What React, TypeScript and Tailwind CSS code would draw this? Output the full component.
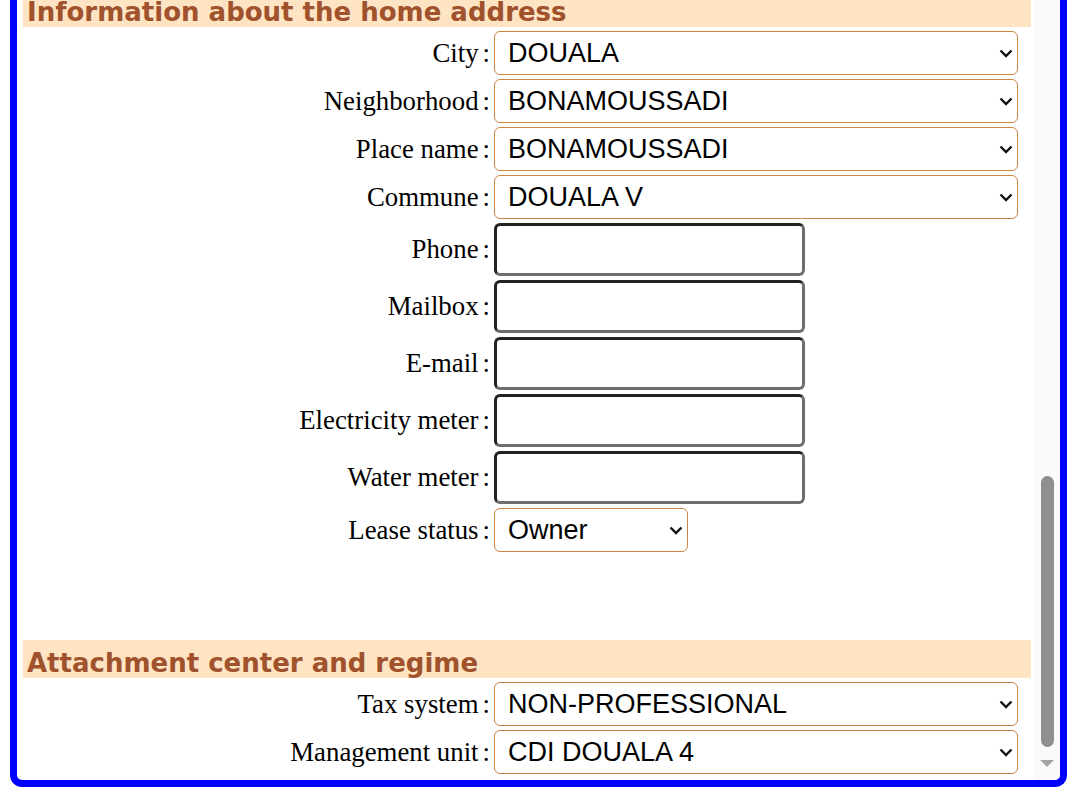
import React from 'react';

const label = 'text-right text-[26.8px] text-black leading-none [font-family:"Liberation_Serif",serif]';
const selectCls =
  'h-[44px] appearance-none border border-[#cd853f] rounded-[6px] bg-white pl-[13px] pr-8 text-[27px] text-black [font-family:"Liberation_Sans",Arial,sans-serif]';
const inputCls =
  'h-[53px] w-[311px] border-[3px] border-t-[#222] border-l-[#222] border-b-[#6e6e6e] border-r-[#6e6e6e] rounded-[6px] bg-white';

const Row = ({ name, children }: { name: string; children: React.ReactNode }) => (
  <div className="flex items-center">
    <div className={`${label} w-[477px] pr-1`}>
      {name}
      <span className="ml-[4px]">:</span>
    </div>
    {children}
  </div>
);

const Heading = ({ children }: { children: React.ReactNode }) => (
  <div className="ml-[6px] mr-[3px] h-[38px] bg-[#ffe4c4] pl-1 pt-[10px] text-[26px] font-bold leading-none text-[#a0522d] [font-family:'DejaVu_Sans',Verdana,sans-serif]">
    {children}
  </div>
);

const Select = ({ value, width }: { value: string; width: string }) => (
  <div className={`relative ${width}`}>
    <select className={`${selectCls} w-full`} defaultValue={value}>
      <option>{value}</option>
    </select>
    <svg
      width="14"
      height="9"
      viewBox="0 0 14 9"
      className="pointer-events-none absolute right-[5px] top-[18px]"
    >
      <path d="M1.5 1.5 L7 7 L12.5 1.5" fill="none" stroke="#111" strokeWidth="2.4" />
    </svg>
  </div>
);

export default function App() {
  const addressSelects = [
    { name: 'City', value: 'DOUALA' },
    { name: 'Neighborhood', value: 'BONAMOUSSADI' },
    { name: 'Place name', value: 'BONAMOUSSADI' },
    { name: 'Commune', value: 'DOUALA V' },
  ];
  const inputs = ['Phone', 'Mailbox', 'E-mail', 'Electricity meter', 'Water meter'];

  return (
    <div className="h-[789px] w-[1075px] overflow-hidden bg-white">
      <div className="ml-[10px] flex h-[787px] w-[1057px] overflow-hidden rounded-b-[12px] border-x-[7px] border-b-[7px] border-t-0 border-[#0000ff]">
        {/* Form */}
        <div className="flex-1 overflow-hidden">
          <div className="-mt-[11px] flex flex-col gap-1">
            <Heading>Information about the home address</Heading>
            {addressSelects.map((s) => (
              <Row key={s.name} name={s.name}>
                <Select value={s.value} width="w-[524px]" />
              </Row>
            ))}
            {inputs.map((n) => (
              <Row key={n} name={n}>
                <input className={inputCls} />
              </Row>
            ))}
            <Row name="Lease status">
              <Select value="Owner" width="w-[194px]" />
            </Row>
            <div className="h-[80px]" />
            <Heading>Attachment center and regime</Heading>
            <Row name="Tax system">
              <Select value="NON-PROFESSIONAL" width="w-[524px]" />
            </Row>
            <Row name="Management unit">
              <Select value="CDI DOUALA 4" width="w-[524px]" />
            </Row>
          </div>
        </div>

        {/* Scrollbar */}
        <div className="flex w-[26px] flex-col items-center bg-[#fafafa] pb-[12px]">
          <div className="flex-1" />
          <div className="h-[271px] w-[13px] rounded-full bg-[#8f8f8f]" />
          <svg width="16" height="9" viewBox="0 0 16 9" className="mt-[12px]">
            <polygon points="1,1 15,1 8,8" fill="#a3a3a3" />
          </svg>
        </div>
      </div>
    </div>
  );
}
